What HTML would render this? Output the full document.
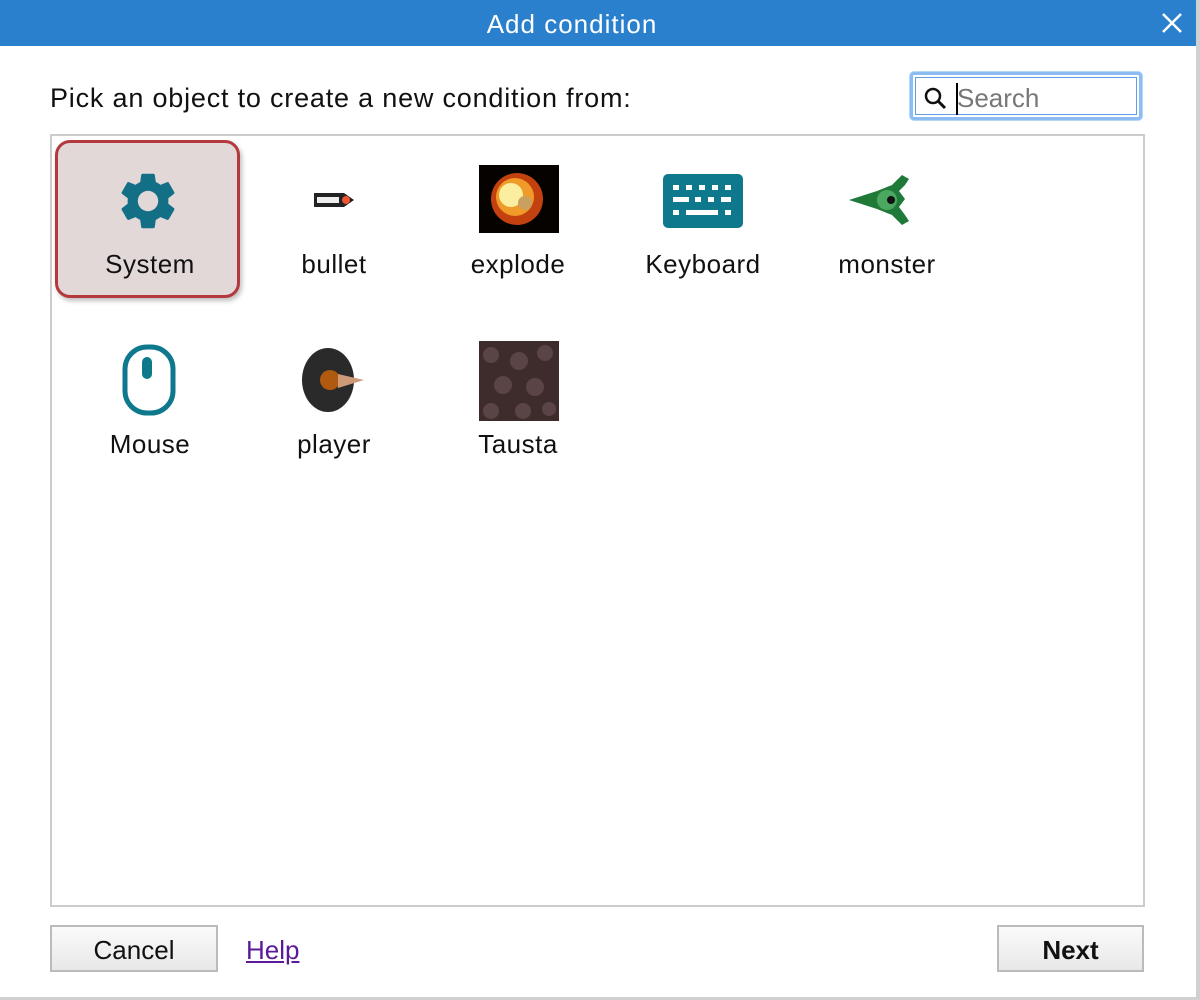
<!DOCTYPE html>
<html><head><style>
body{margin:0;width:1200px;height:1000px;background:#fff;position:relative;overflow:hidden;font-family:"Liberation Sans",sans-serif;}
.titlebar{position:absolute;left:0;top:0;width:1196px;height:46px;background:#2a80cc;}
.title{position:absolute;left:0;top:0;width:1144px;height:46px;color:#fff;font-size:26px;letter-spacing:1px;text-align:center;line-height:48px;}
.rs{position:absolute;left:1196px;top:0;width:4px;height:1000px;background:#d0d0d0;}
.bs{position:absolute;left:0;top:997px;width:1200px;height:3px;background:#d0d0d0;}
.lbl{position:absolute;left:50px;top:83px;font-size:27px;letter-spacing:0.8px;color:#111;}
.search{position:absolute;left:910px;top:72px;width:232px;height:48px;border:3px solid #8bbcf3;border-radius:4px;box-sizing:border-box;background:#fff;box-shadow:0 0 0 1px #b8d6f8;}
.search .in{position:absolute;left:2px;top:2px;right:2px;bottom:2px;border:1px solid #5e9ee6;}
.search span{position:absolute;left:44px;top:8px;font-size:26px;color:#777;}
.cur{position:absolute;left:43px;top:8px;width:2px;height:32px;background:#000;}
.list{position:absolute;left:50px;top:134px;width:1095px;height:773px;border:2px solid #ccc;box-sizing:border-box;}
.sel{position:absolute;left:55px;top:140px;width:185px;height:158px;border:3px solid #b4393e;border-radius:15px;box-sizing:border-box;background:#e3d8d8;box-shadow:2px 3px 5px rgba(0,0,0,.25);}
.t{position:absolute;font-size:26px;letter-spacing:0.5px;color:#111;width:184px;text-align:center;}
.ic{position:absolute;}
.btn{position:absolute;top:925px;height:47px;border:2px solid #bbb;box-sizing:border-box;background:linear-gradient(#fafafa,#e8e8e8);font-size:26px;text-align:center;line-height:46px;color:#111;}
</style></head><body>
<div class="titlebar"></div>
<div class="title">Add condition</div>
<svg style="position:absolute;left:1161px;top:12px" width="22" height="22"><path d="M2 2L20 20M20 2L2 20" stroke="#fff" stroke-width="2.5"/></svg>
<div class="rs"></div><div class="bs"></div>
<div class="lbl">Pick an object to create a new condition from:</div>
<div class="search"><div class="in"></div>
<svg style="position:absolute;left:10px;top:11px" width="26" height="26"><circle cx="10" cy="10" r="7" fill="none" stroke="#111" stroke-width="2.5"/><path d="M15 15L22 22" stroke="#111" stroke-width="3"/></svg>
<div class="cur"></div><span>Search</span></div>
<div class="list"></div>
<div class="sel"></div>
<svg class="ic" style="left:114px;top:167px" width="68" height="68" viewBox="0 0 24 24"><path fill="#136f86" d="M19.14 12.94c.04-.3.06-.61.06-.94 0-.32-.02-.64-.07-.94l2.030-1.58a.49.49 0 00.12-.61l-1.92-3.32a.488.488 0 00-.59-.22l-2.39.96c-.5-.38-1.03-.7-1.62-.94l-.36-2.540a.484.484 0 00-.48-.41h-3.84c-.24 0-.43.17-.47.41l-.36 2.54c-.59.24-1.13.57-1.62.94l-2.39-.96c-.22-.08-.47 0-.59.22L2.74 8.87c-.12.21-.08.47.12.61l2.03 1.58c-.05.3-.09.63-.09.94s.02.64.07.94l-2.03 1.58a.49.49 0 00-.12.61l1.92 3.32c.12.22.37.29.59.22l2.39-.96c.5.38 1.03.7 1.62.94l.36 2.54c.05.24.24.41.48.41h3.840c.24 0 .44-.17.47-.41l.36-2.54c.59-.24 1.13-.56 1.62-.94l2.39.96c.22.08.47 0 .59-.22l1.92-3.32c.12-.22.07-.47-.12-.61l-2.01-1.58zM12 15.6A3.6 3.6 0 1112 8.4a3.6 3.6 0 010 7.2z"/></svg>
<div class="t" style="left:58px;top:249px">System</div>
<svg class="ic" style="left:312px;top:190px" width="46" height="20"><path d="M2 3h30l10 7-10 7H2z" fill="#222"/><rect x="5" y="7" width="22" height="6" fill="#eee"/><circle cx="34" cy="10" r="4" fill="#e53"/></svg>
<div class="t" style="left:242px;top:249px">bullet</div>
<svg class="ic" style="left:479px;top:165px" width="80" height="68"><rect width="80" height="68" fill="#050200"/><circle cx="38" cy="34" r="26" fill="#c2410f"/><circle cx="36" cy="32" r="19" fill="#f09a2a"/><circle cx="32" cy="30" r="12" fill="#fbeea0"/><circle cx="46" cy="38" r="7" fill="#c9a060"/></svg>
<div class="t" style="left:426px;top:249px">explode</div>
<svg class="ic" style="left:663px;top:174px" width="80" height="54"><rect width="80" height="54" rx="5" fill="#0e798d"/><g fill="#fff"><rect x="10" y="11" width="6" height="5"/><rect x="23" y="11" width="6" height="5"/><rect x="36" y="11" width="6" height="5"/><rect x="49" y="11" width="6" height="5"/><rect x="62" y="11" width="6" height="5"/><rect x="10" y="23" width="16" height="5"/><rect x="32" y="23" width="6" height="5"/><rect x="45" y="23" width="6" height="5"/><rect x="58" y="23" width="10" height="5"/><rect x="10" y="36" width="6" height="5"/><rect x="23" y="36" width="32" height="5"/><rect x="62" y="36" width="6" height="5"/></g></svg>
<div class="t" style="left:611px;top:249px">Keyboard</div>
<svg class="ic" style="left:847px;top:173px" width="80" height="54"><path d="M2 27L30 18 45 12 55 2 62 6 58 12 52 18 58 26 52 34 58 42 62 48 55 52 45 42 30 36z" fill="#1f7a3a"/><circle cx="40" cy="27" r="10" fill="#4ca860"/><circle cx="44" cy="27" r="4" fill="#111"/></svg>
<div class="t" style="left:795px;top:249px">monster</div>
<svg class="ic" style="left:122px;top:344px" width="54" height="72"><rect x="3" y="3" width="48" height="66" rx="22" fill="none" stroke="#0e798d" stroke-width="5"/><rect x="20" y="13" width="10" height="22" rx="5" fill="#0e798d"/></svg>
<div class="t" style="left:58px;top:429px">Mouse</div>
<svg class="ic" style="left:298px;top:344px" width="74" height="72"><ellipse cx="30" cy="36" rx="26" ry="32" fill="#2a2a2a"/><circle cx="32" cy="36" r="10" fill="#b05a10"/><path d="M40 30L66 36 40 44z" fill="#cf9a78"/></svg>
<div class="t" style="left:242px;top:429px">player</div>
<svg class="ic" style="left:479px;top:341px" width="80" height="80"><rect width="80" height="80" fill="#3e2b2c"/><g fill="#5a4446"><circle cx="12" cy="14" r="8"/><circle cx="40" cy="20" r="9"/><circle cx="66" cy="12" r="8"/><circle cx="24" cy="44" r="9"/><circle cx="56" cy="46" r="9"/><circle cx="12" cy="70" r="8"/><circle cx="44" cy="70" r="8"/><circle cx="70" cy="68" r="7"/></g></svg>
<div class="t" style="left:426px;top:429px">Tausta</div>
<div class="btn" style="left:50px;width:168px">Cancel</div>
<div style="position:absolute;left:246px;top:935px;font-size:26px;color:#5a1a9a;text-decoration:underline">Help</div>
<div class="btn" style="left:997px;width:147px;font-weight:bold">Next</div>
</body></html>
